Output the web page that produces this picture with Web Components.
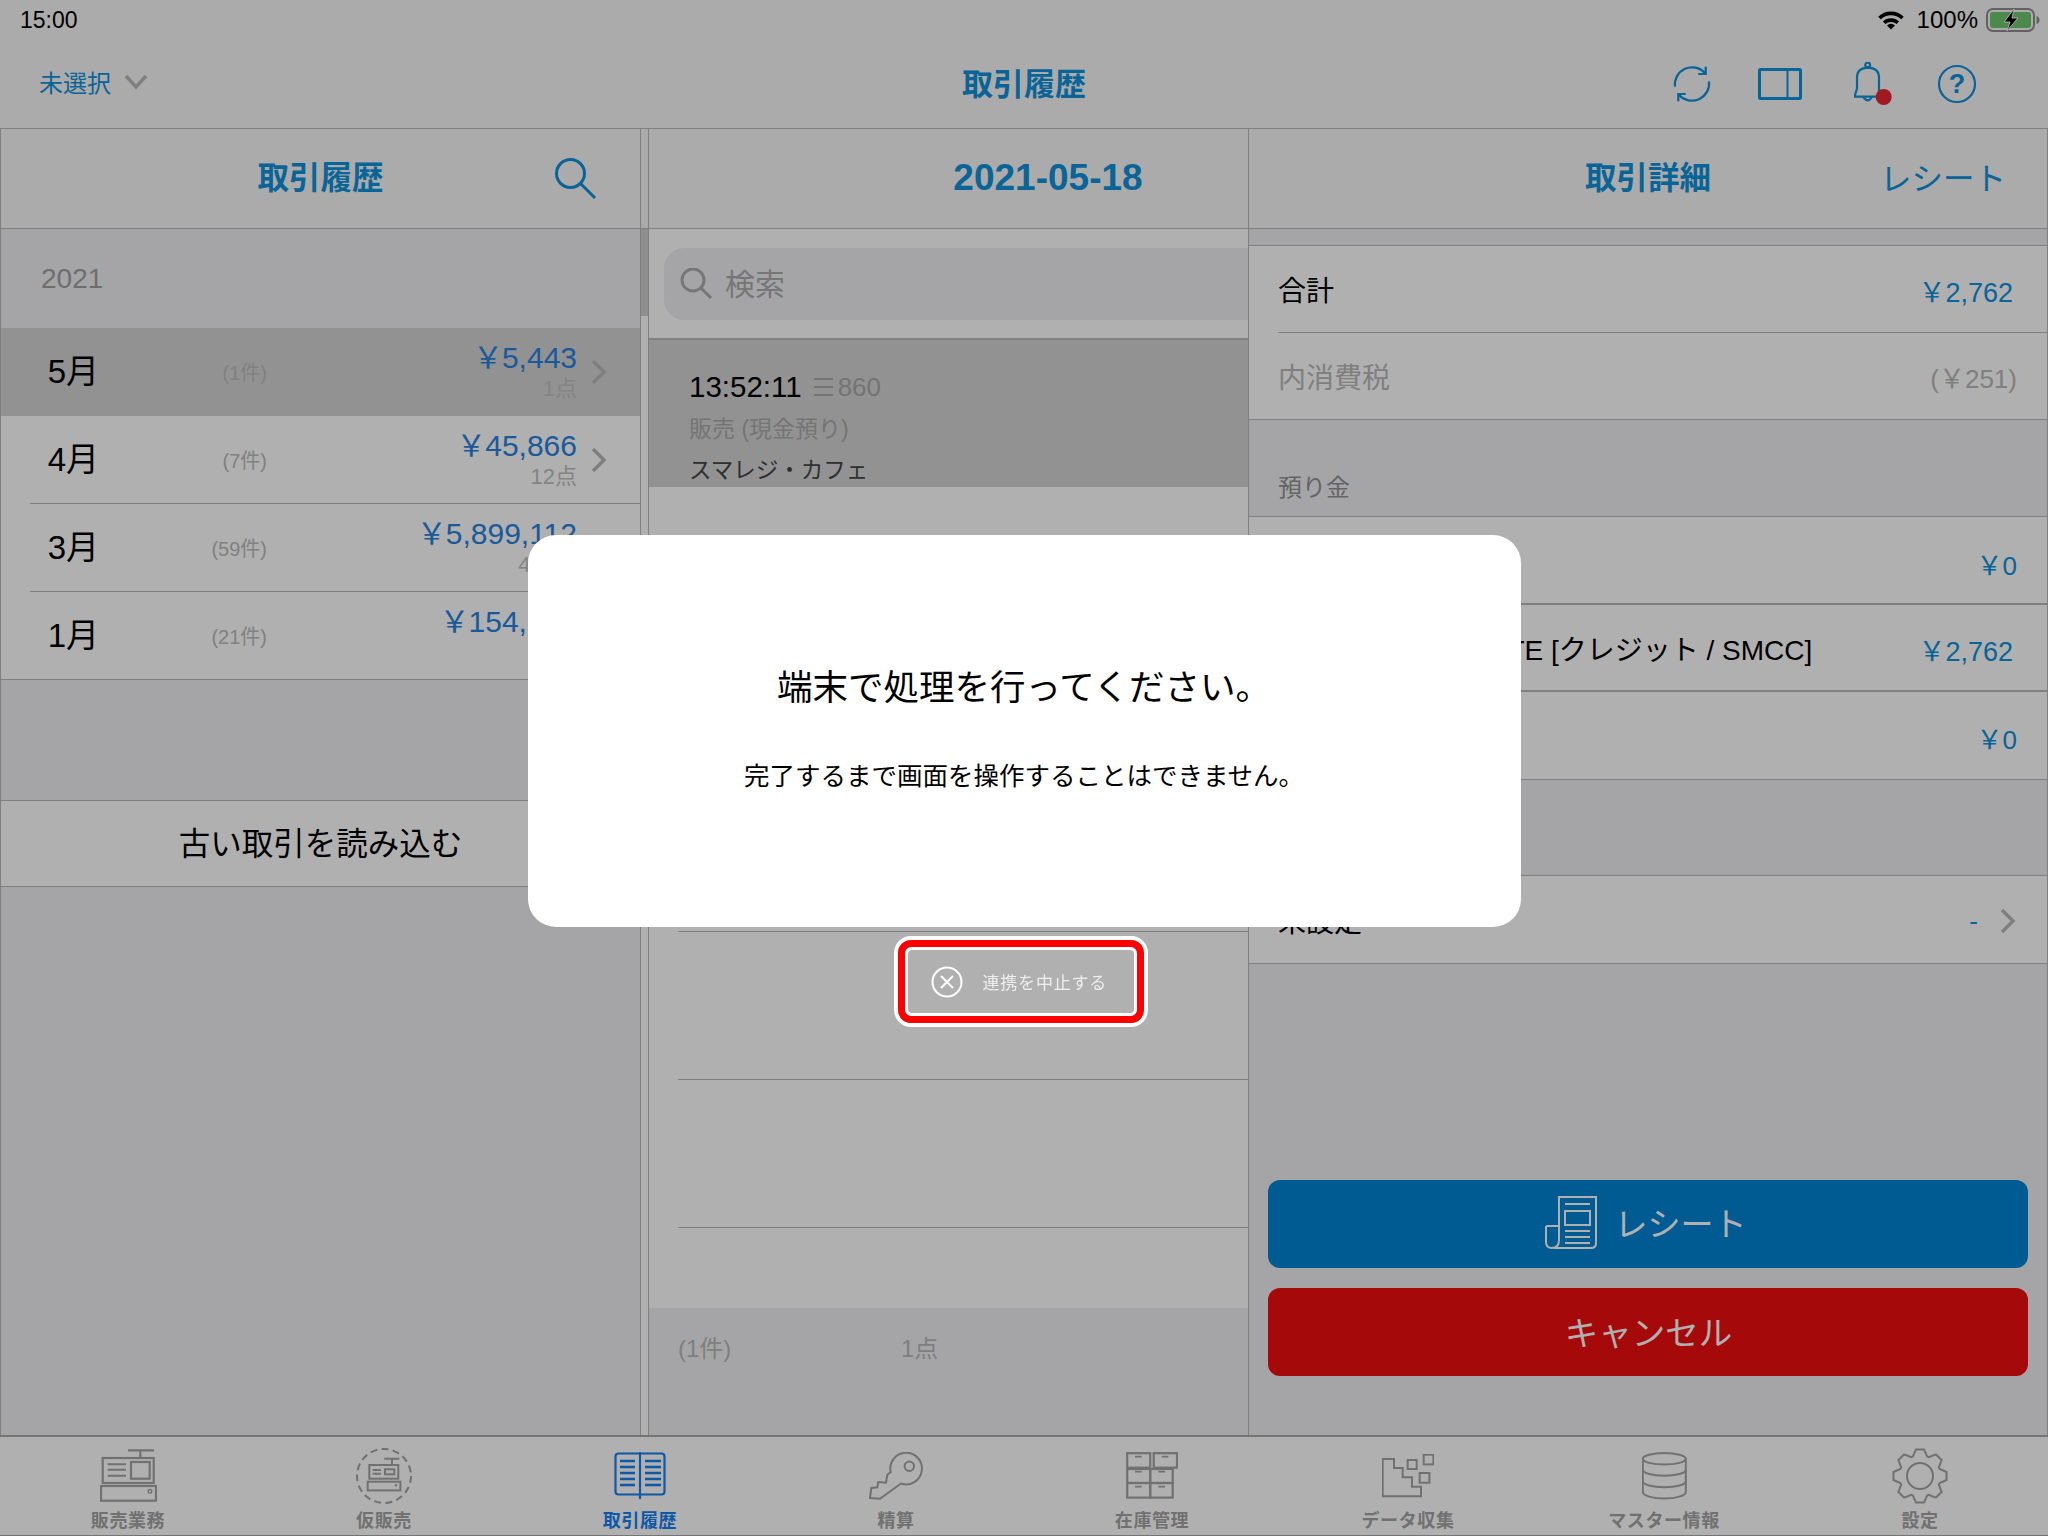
<!DOCTYPE html>
<html lang="ja">
<head>
<meta charset="utf-8">
<title>取引履歴</title>
<style>
  html, body { margin: 0; padding: 0; }
  body {
    width: 2048px;
    height: 1536px;
    overflow: hidden;
    background: #f0f0f3;
    color: #000;
    font-family: "Liberation Sans", "Noto Sans CJK JP", sans-serif;
    --blue: #0e91dc;
    --line: #b9b9b9;
    --section: #f0f0f3;
  }
  pos-shell { display: block; }
  svg { display: block; }
</style>
</head>
<body>

<pos-shell>
  <pos-status-bar time="15:00" level="100%"></pos-status-bar>
  <pos-nav-bar shop="未選択" title="取引履歴"></pos-nav-bar>

  <pos-panes>
    <month-pane title="取引履歴" year="2021">
      <month-row selected label="5月" count="(1件)" amount="5,443" items="1点" chevron></month-row>
      <month-row label="4月" count="(7件)" amount="45,866" items="12点" chevron sep></month-row>
      <month-row label="3月" count="(59件)" amount="5,899,112" items="412点" chevron sep></month-row>
      <month-row label="1月" count="(21件)" amount="154,308" items="38点" chevron full></month-row>
    </month-pane>

    <pane-rail></pane-rail>

    <sale-pane date="2021-05-18" count="(1件)" items="1点">
      <sale-row selected time="13:52:11" no="860" kind="販売 (現金預り)" shop="スマレジ・カフェ"></sale-row>
      <sale-row></sale-row>
      <sale-row sep></sale-row>
      <sale-row sep></sale-row>
      <sale-row sep></sale-row>
      <sale-row sep></sale-row>
      <sale-row sep></sale-row>
    </sale-pane>

    <detail-pane title="取引詳細" action="レシート">
      <detail-row label="合計" value="2,762" yen inset trim></detail-row>
      <detail-row muted label="内消費税" value="251" yen paren></detail-row>
      <detail-section label="預り金"></detail-section>
      <detail-row label="現金" value="0" yen heavy tall low></detail-row>
      <detail-row label="スマレジ・PAYGATE [クレジット / SMCC]" value="2,762" yen heavy trim></detail-row>
      <detail-row label="電子マネー" value="0" yen tall></detail-row>
      <detail-section short label="顧客"></detail-section>
      <detail-row label="未設定" value="-" chevron tall></detail-row>
      <action-button slot="actions" tone="blue">
        <svg width="52" height="53" viewBox="0 0 52 53" fill="none" stroke="currentColor" stroke-width="2">
          <path d="M14 44 V1 H51 V47 Q51 52 46 52 H9"/>
          <path d="M1 30 H14 M1 30 V46 Q1 52 7 52 Q14 52 14 44"/>
          <path d="M20 8 H45 M20 41 H45 M20 47 H45 M20 35 H45"/>
          <rect x="20" y="15" width="25" height="14"/>
        </svg>
        <span>レシート</span>
      </action-button>
      <action-button slot="actions" tone="red"><span style="padding-left: 6px; font-size: 33.5px;">キャンセル</span></action-button>
    </detail-pane>
  </pos-panes>

  <pos-tab-bar>
    <tab-item label="販売業務">
      <svg width="57" height="53" viewBox="0 0 57 53" fill="none" stroke="currentColor" stroke-width="2.2">
        <path d="M28 1.3 H54 M40.3 1.3 V9"/>
        <rect x="2.7" y="9" width="51" height="25"/>
        <path d="M7.7 15.3 H26 M7.7 20.7 H26 M7.7 26.7 H26" stroke-width="2"/>
        <rect x="31" y="13" width="18.7" height="16.7"/>
        <rect x="1" y="37" width="55" height="14.7"/>
        <circle cx="50" cy="42.3" r="1.8" stroke-width="1.4"/>
      </svg>
    </tab-item>
    <tab-item label="仮販売">
      <svg width="58" height="58" viewBox="-29 -29 58 58" fill="none" stroke="currentColor" stroke-width="2">
        <circle r="27" stroke-dasharray="7 4.3"/>
        <path d="M0.3 -17.3 H15.3 M8 -17.3 V-11"/>
        <rect x="-14.7" y="-11" width="29" height="13.7"/>
        <path d="M-11.3 -6 H-3 M-11.3 -2.3 H-3"/>
        <rect x="1" y="-6.7" width="9.3" height="5"/>
        <rect x="-16.3" y="5.7" width="32.7" height="8.7"/>
        <circle cx="12" cy="9.3" r="1.2" fill="currentColor" stroke="none"/>
      </svg>
    </tab-item>
    <tab-item active label="取引履歴">
      <svg width="52" height="47" viewBox="0 0 52 47" fill="none" stroke="currentColor" stroke-width="2.2">
        <rect x="1.5" y="1.5" width="49" height="41" rx="3"/>
        <path d="M26 0 V47"/>
        <path d="M6 9 H21 M6 15 H21 M6 21 H21 M6 27 H21 M6 33 H21" stroke-width="2.6"/>
        <path d="M31 9 H47 M31 15 H47 M31 21 H47 M31 27 H47 M31 33 H47" stroke-width="2.6"/>
      </svg>
    </tab-item>
    <tab-item label="精算">
      <svg width="55" height="48" viewBox="0 0 55 48" fill="none" stroke="currentColor" stroke-width="2">
        <path d="M21.7 20 A15.8 15.8 0 1 1 32 31.5 L11 46.7 L1 46 L2.3 36 L8.3 35.3 L9.3 30 L17 30.7 L18.3 22.7 Z"/>
        <circle cx="40.3" cy="14.3" r="4.7"/>
      </svg>
    </tab-item>
    <tab-item label="在庫管理">
      <svg width="52" height="47" viewBox="0 0 52 47" fill="none" stroke="currentColor" stroke-width="2.2">
        <rect x="1.2" y="1.2" width="23" height="14.5"/>
        <rect x="27.7" y="1.2" width="23.3" height="14.5"/>
        <rect x="1.2" y="17" width="23" height="14"/>
        <rect x="24.2" y="17" width="22.5" height="14"/>
        <rect x="1.2" y="31" width="23" height="14.6"/>
        <rect x="24.2" y="31" width="22.5" height="14.6"/>
        <path d="M9 4.7 H15.7 M35.7 4.7 H42.3 M9 19.7 H15.7 M32.3 19.7 H39 M9 34.7 H15.7 M32.3 34.7 H39" stroke-width="1.8"/>
      </svg>
    </tab-item>
    <tab-item label="データ収集">
      <svg width="52" height="44" viewBox="0 0 52 44" fill="none" stroke="currentColor" stroke-width="2">
        <path d="M0.7 5 H12 V14 H20.7 V23.3 H30 V32.7 H39 V42.3 H0.7 Z"/>
        <rect x="25.7" y="6" width="9" height="9"/>
        <rect x="41.7" y="0.7" width="9.7" height="9.7"/>
        <rect x="37.7" y="19" width="9.7" height="9.7"/>
      </svg>
    </tab-item>
    <tab-item label="マスター情報">
      <svg width="45" height="48" viewBox="0 0 45 48" fill="none" stroke="currentColor" stroke-width="2">
        <ellipse cx="22.3" cy="6.8" rx="21.5" ry="5.8"/>
        <path d="M0.8 6.8 V40 A21.5 6.5 0 0 0 43.8 40 V6.8"/>
        <path d="M0.8 17.7 A21.5 6 0 0 0 43.8 17.7 M0.8 29.3 A21.5 6 0 0 0 43.8 29.3"/>
      </svg>
    </tab-item>
    <tab-item label="設定">
      <svg width="56" height="56" viewBox="-28 -28 56 56" fill="none" stroke="currentColor" stroke-width="2">
        <defs><path id="tooth" d="M-7.6 -18.6 L-4 -26.5 H4 L7.6 -18.6"/></defs>
        <use href="#tooth"/><use href="#tooth" transform="rotate(45)"/>
        <use href="#tooth" transform="rotate(90)"/><use href="#tooth" transform="rotate(135)"/>
        <use href="#tooth" transform="rotate(180)"/><use href="#tooth" transform="rotate(225)"/>
        <use href="#tooth" transform="rotate(270)"/><use href="#tooth" transform="rotate(315)"/>
        <circle r="13"/>
      </svg>
    </tab-item>
  </pos-tab-bar>
</pos-shell>

<modal-layer>
  <processing-dialog>
    <span slot="title">端末で処理を行ってください。</span>
    <span slot="note">完了するまで画面を操作することはできません。</span>
  </processing-dialog>
  <stop-button>連携を中止する</stop-button>
</modal-layer>

<script>
  const YEN = '\uFFE5';
  const CHEVRON = `<svg width="16" height="26" viewBox="0 0 16 26" fill="none" stroke="#b9b9b9" stroke-width="3.4"><path d="M2 2 L13 13 L2 24"/></svg>`;

  class PosElement extends HTMLElement {
    constructor() {
      super();
      this.attachShadow({ mode: 'open' });
    }
    connectedCallback() {
      this.shadowRoot.innerHTML = this.render();
    }
    attr(name, fallback = '') {
      const v = this.getAttribute(name);
      return v === null ? fallback : v;
    }
  }

  class PosStatusBar extends PosElement {
    render() {
      return `
        <style>
          :host { display: flex; align-items: center; height: 40px; padding: 0 8px 0 20px; background: #f8f8f8; box-sizing: border-box; }
          .time { font-size: 23px; flex: 1; }
          .level { font-size: 24px; margin: 0 8px 0 13px; }
          svg { display: block; }
        </style>
        <span class="time">${this.attr('time')}</span>
        <svg width="26" height="20" viewBox="0 0 26 20">
          <g fill="none" stroke="#000" stroke-width="3.6">
            <path d="M1.5 8 A16.5 16.5 0 0 1 24.5 8"/>
            <path d="M6.2 12.8 A10 10 0 0 1 19.8 12.8"/>
          </g>
          <path d="M13 19.5 L9 15.4 A5.6 5.6 0 0 1 17 15.4 Z"/>
        </svg>
        <span class="level">${this.attr('level')}</span>
        <svg width="54" height="24" viewBox="0 0 54 24">
          <rect x="1" y="1" width="47" height="22" rx="6" fill="none" stroke="#8f8f8f" stroke-width="2"/>
          <rect x="4" y="4" width="41" height="16" rx="3" fill="#6fc96f"/>
          <path d="M50.5 8 Q53.5 9 53.5 12 Q53.5 15 50.5 16 Z" fill="#8f8f8f"/>
          <path d="M28 1 L18 14 H24 L21 23 L32 10 H26 Z" stroke="#f8f8f8" stroke-width="1"/>
        </svg>`;
    }
  }

  class PosNavBar extends PosElement {
    render() {
      return `
        <style>
          :host { display: grid; grid-template-columns: 1fr auto 1fr; align-items: center; height: 89px; box-sizing: border-box; padding-bottom: 5px; background: #f8f8f8; border-bottom: 1px solid var(--line); color: var(--blue); }
          .shop { display: flex; align-items: center; gap: 13px; padding-left: 39px; font-size: 24px; }
          .title { font-size: 31px; font-weight: 700; }
          .tools { display: flex; align-items: center; justify-content: flex-end; padding-right: 71px; padding-top: 4px; }
          svg { display: block; }
          .dot { fill: #e82630; stroke: none; }
        </style>
        <div class="shop">${this.attr('shop')}
          <svg width="24" height="16" viewBox="0 0 24 16" fill="none" stroke="#b9b9b9" stroke-width="3.4"><path d="M2 2 L12 13 L22 2"/></svg>
        </div>
        <div class="title">${this.attr('title')}</div>
        <div class="tools">
          <svg width="38" height="40" viewBox="0 0 38 40" fill="none" stroke="currentColor" stroke-width="2.2">
            <path d="M2 22.7 A17.3 17.3 0 0 1 32 9"/><path d="M36 17.3 A17.3 17.3 0 0 1 6 31"/>
            <path d="M32.7 2.7 V10 H25.3"/><path d="M5.3 37.3 V30 H12.7"/>
          </svg>
          <svg style="margin-left: 47px" width="44" height="32" viewBox="0 0 44 32" fill="none" stroke="currentColor" stroke-width="3">
            <rect x="1.5" y="1.5" width="41" height="29" rx="1"/><path d="M29.5 1 V31" stroke-width="2"/>
          </svg>
          <svg style="margin-left: 52px" width="40" height="44" viewBox="0 0 40 44" fill="none" stroke="currentColor" stroke-width="2.2">
            <path d="M22 34.7 H0.5 L3 26.7 V15.7 Q3 6 14 5.7 Q25 6 25 15.7 V29"/>
            <circle cx="13.7" cy="3" r="2.4"/>
            <path d="M9 34.7 Q13.7 42 18 34.7"/>
            <circle class="dot" cx="29.7" cy="35" r="8"/>
          </svg>
          <svg style="margin-left: 43px" width="40" height="40" viewBox="0 0 40 40" fill="none" stroke="currentColor" stroke-width="2.2">
            <circle cx="20" cy="20" r="18"/>
            <text x="20" y="29" text-anchor="middle" font-size="27" font-weight="700" fill="currentColor" stroke="none">?</text>
          </svg>
        </div>`;
    }
  }

  class PosPanes extends PosElement {
    render() {
      return `
        <style>
          :host { display: grid; grid-template-columns: 641px 7px 600px 800px; height: 1306px; }
        </style>
        <slot></slot>`;
    }
  }

  class PaneRail extends PosElement {
    render() {
      return `
        <style>
          :host { display: block; background: #fff; }
          .head { height: 100px; box-sizing: border-box; background: #f8f8f8; border-bottom: 1px solid var(--line); }
          .thumb { height: 87px; background: #cfcfcf; }
        </style>
        <div class="head"></div>
        <div class="thumb"></div>`;
    }
  }

  class PaneHeader extends PosElement {
    render() {
      return `
        <style>
          :host { display: flex; align-items: center; justify-content: center; position: relative; height: 100px; box-sizing: border-box; flex: none; padding-bottom: 7px; background: #f8f8f8; border-bottom: 1px solid var(--line); color: var(--blue); font-size: 31.5px; font-weight: 700; }
          .end { position: absolute; top: 0; bottom: 0; display: flex; align-items: center; font-weight: 400; }
        </style>
        <slot></slot>
        <div class="end" style="${this.attr('end-style')}"><slot name="end"></slot></div>`;
    }
  }

  class MonthPane extends PosElement {
    render() {
      return `
        <style>
          :host { display: flex; flex-direction: column; background: var(--section); border-left: 1px solid var(--line); border-right: 1px solid var(--line); box-sizing: border-box; }
          .year { height: 99px; display: flex; align-items: center; padding-left: 40px; font-size: 28px; color: #a0a0a0; box-sizing: border-box; }
          .more { margin-top: 120px; height: 87px; display: flex; align-items: center; justify-content: center; padding-bottom: 5px; box-sizing: border-box; background: #fff; border-top: 1px solid var(--line); border-bottom: 1px solid var(--line); font-size: 31.5px; }
        </style>
        <pane-header end-style="right: 43px;">${this.attr('title')}
          <svg slot="end" width="42" height="42" viewBox="0 0 42 42" fill="none" stroke="currentColor" stroke-width="3"><circle cx="15.5" cy="15.5" r="14"/><path d="M26 26 L40 40"/></svg>
        </pane-header>
        <div class="year">${this.attr('year')}</div>
        <slot></slot>
        <div class="more">古い取引を読み込む</div>`;
    }
  }

  class MonthRow extends PosElement {
    render() {
      const bg = this.hasAttribute('selected') ? '#d4d4d5' : '#fff';
      const line = this.hasAttribute('sep') || this.hasAttribute('full') ? 'var(--line)' : 'transparent';
      return `
        <style>
          :host { display: block; height: 88px; box-sizing: border-box; background: ${bg}; }
          .row { display: grid; grid-template-columns: 98px 168px 310px 30px; align-items: center; height: 88px; box-sizing: border-box; border-bottom: 1px solid ${line}; position: relative; }
          :host([sep]) .row::before { content: ""; position: absolute; left: 0; width: 29px; bottom: -1px; height: 1px; background: ${bg}; }
          .label { font-size: 33px; line-height: 40px; text-align: right; }
          .count { font-size: 20px; color: #bbb; text-align: right; }
          .sum { text-align: right; white-space: nowrap; }
          .amount { font-size: 30px; line-height: 32px; color: #2683df; }
          .yen { margin-right: -1px; }
          .items { font-size: 22px; line-height: 26px; color: #c0c0c0; margin-top: 2px; }
          .chev { padding-left: 14px; }
          svg { display: block; }
        </style>
        <div class="row">
          <div class="label">${this.attr('label')}</div>
          <div class="count">${this.attr('count')}</div>
          <div class="sum">
            <div class="amount"><span class="yen">${YEN}</span>${this.attr('amount')}</div>
            <div class="items">${this.attr('items')}</div>
          </div>
          <div class="chev">${CHEVRON}</div>
        </div>`;
    }
  }

  class SalePane extends PosElement {
    render() {
      return `
        <style>
          :host { display: flex; flex-direction: column; box-sizing: border-box; height: 1306px; background: #fff; border-left: 1px solid var(--line); }
          .search-band { flex: none; height: 111px; padding: 19px 0 18px 15px; box-sizing: border-box; border-bottom: 2px solid var(--line); }
          .search { height: 72px; display: flex; align-items: center; gap: 11px; padding-left: 16px; background: var(--section); border-radius: 20px 0 0 20px; color: #acacac; font-size: 30px; }
          .search span { padding-bottom: 5px; }
          .rows { height: 968px; flex: none; overflow: hidden; }
          .foot { flex: 1; background: var(--section); display: flex; align-items: center; padding: 0 0 50px 29px; font-size: 24px; color: #b8b8b8; }
          .foot span:first-child { width: 223px; }
        </style>
        <pane-header><span style="font-size: 37px; padding: 5px 0 0 199px;">${this.attr('date')}</span></pane-header>
        <div class="search-band">
          <div class="search">
            <svg width="34" height="32" viewBox="0 0 34 32" fill="none" stroke="currentColor" stroke-width="3"><circle cx="13" cy="12" r="11"/><path d="M21 20 L31 30"/></svg>
            <span>検索</span>
          </div>
        </div>
        <div class="rows"><slot></slot></div>
        <div class="foot"><span>${this.attr('count')}</span><span>${this.attr('items')}</span></div>`;
    }
  }

  class SaleRow extends PosElement {
    render() {
      const body = this.hasAttribute('time') ? `
        <div class="top"><span class="time">${this.attr('time')}</span><span class="no"><i></i>${this.attr('no')}</span></div>
        <div class="kind">${this.attr('kind')}</div>
        <div class="shop">${this.attr('shop')}</div>` : '';
      return `
        <style>
          :host { display: block; height: 148px; box-sizing: border-box; overflow: hidden; padding-left: 40px; position: relative; line-height: 40px; }
          :host([selected]) { height: 147px; background: #d4d4d5; padding-top: 27px; }
          :host([sep])::before { content: ""; position: absolute; left: 29px; right: 0; top: 0; height: 1px; background: var(--line); }
          .top { display: flex; align-items: center; height: 40px; }
          .time { font-size: 29.5px; }
          .no { font-size: 26px; color: #a8a8a8; margin-left: 12px; display: flex; align-items: center; gap: 5px; }
          i { display: block; width: 19px; height: 14px; border-top: 2px solid #a8a8a8; border-bottom: 2px solid #a8a8a8; position: relative; }
          i::after { content: ""; position: absolute; left: 0; right: 0; top: 6px; height: 2px; background: #a8a8a8; }
          .kind { font-size: 23px; color: #aaa; margin-top: 2px; }
          .shop { font-size: 22.5px; color: #444; margin-top: 2px; }
        </style>
        ${body}`;
    }
  }

  class DetailPane extends PosElement {
    render() {
      return `
        <style>
          :host { display: flex; flex-direction: column; background: var(--section); border-left: 1px solid var(--line); border-right: 1px solid var(--line); box-sizing: border-box; }
          .band { height: 16px; flex: none; border-bottom: 1px solid var(--line); box-sizing: content-box; }
          .actions { display: flex; flex-direction: column; gap: 20px; padding: 216px 19px 0 19px; }
        </style>
        <pane-header end-style="right: 41px; font-size: 31.5px; padding-bottom: 5px;">${this.attr('title')}
          <span slot="end">${this.attr('action')}</span>
        </pane-header>
        <div class="band"></div>
        <slot></slot>
        <div class="actions"><slot name="actions"></slot></div>`;
    }
  }

  class DetailRow extends PosElement {
    render() {
      const v = this.attr('value');
      const yen = this.hasAttribute('yen') ? `<span class="yen">${YEN}</span>` : '';
      const val = this.hasAttribute('paren') ? `(${yen}${v})` : `${yen}${v}`;
      return `
        <style>
          :host { display: flex; align-items: center; height: 87px; flex: none; box-sizing: border-box; padding: 0 30px 0 29px; background: #fff; position: relative; font-size: 28px; border-bottom: 1px solid var(--line); }
          :host([tall]) { height: 88px; }
          :host([heavy]) { border-bottom-width: 2px; }
          :host([trim]) { padding-right: 34px; }
          :host([inset]) { border-bottom-color: #fff; }
          :host([inset])::after { content: ""; position: absolute; left: 29px; right: 0; bottom: -1px; height: 1px; background: var(--line); }
          :host([muted]) .label, :host([muted]) .value { color: #b9b9b9; }
          :host([muted]) .value { padding-top: 0; }
          :host([low]) .value { padding-top: 7px; }
          .label { flex: 1; }
          .value { font-size: 26px; color: var(--blue); padding-top: 3px; display: flex; align-items: center; gap: 22px; }
          :host([trim]) .value { font-size: 27px; }
          svg { display: block; margin-right: 1px; }
        </style>
        <div class="label">${this.attr('label')}</div>
        <div class="value"><span>${val}</span>${this.hasAttribute('chevron') ? CHEVRON : ''}</div>`;
    }
  }

  class DetailSection extends PosElement {
    render() {
      return `
        <style>
          :host { display: flex; align-items: flex-end; height: 97px; flex: none; box-sizing: border-box; padding: 0 0 13px 29px; font-size: 24px; color: #919191; border-bottom: 1px solid var(--line); }
          :host([short]) { height: 96px; }
        </style>
        ${this.attr('label')}`;
    }
  }

  class ActionButton extends PosElement {
    render() {
      const bg = this.attr('tone') === 'red' ? '#ef0e0e' : '#0085d4';
      return `
        <style>
          :host { display: flex; align-items: center; justify-content: center; gap: 18px; height: 88px; box-sizing: border-box; padding: 0 5px 4px 0; border-radius: 12px; background: ${bg}; color: #fff; font-size: 33px; }
        </style>
        <slot></slot>`;
    }
  }

  class PosTabBar extends PosElement {
    render() {
      return `
        <style>
          :host { display: grid; grid-template-columns: repeat(8, 256px); height: 101px; box-sizing: border-box; background: #fff; border-top: 2px solid #a8a8a8; border-bottom: 1px solid #a8a8a8; }
        </style>
        <slot></slot>`;
    }
  }

  class TabItem extends PosElement {
    render() {
      return `
        <style>
          :host { display: flex; flex-direction: column; align-items: center; color: #a4a4a4; overflow: hidden; }
          :host([active]) { color: #1381f4; }
          .icon { display: flex; align-items: center; justify-content: center; padding-top: 9px; box-sizing: border-box; height: 68px; }
          .label { font-size: 18px; line-height: 26px; letter-spacing: 0.6px; font-weight: 700; margin-top: 3px; }
        </style>
        <div class="icon"><slot></slot></div>
        <div class="label">${this.attr('label')}</div>`;
    }
  }

  class ModalLayer extends PosElement {
    render() {
      return `
        <style>
          :host { position: fixed; inset: 0; display: flex; flex-direction: column; align-items: center; padding-top: 535px; box-sizing: border-box; background: rgba(0, 0, 0, 0.31); }
        </style>
        <slot></slot>`;
    }
  }

  class ProcessingDialog extends PosElement {
    render() {
      return `
        <style>
          :host { display: block; width: 993px; height: 392px; box-sizing: border-box; padding-top: 128px; background: #fff; border-radius: 28px; text-align: center; color: #000; }
          .title { font-size: 35.5px; line-height: 50px; }
          .note { font-size: 25.5px; line-height: 40px; margin-top: 43px; }
        </style>
        <div class="title"><slot name="title"></slot></div>
        <div class="note"><slot name="note"></slot></div>`;
    }
  }

  class StopButton extends PosElement {
    render() {
      return `
        <style>
          :host { display: block; margin: 9px 7px 0 0; border: 4px solid #fff; border-radius: 17px; }
          .ring { border: 7px solid #f00; border-radius: 13px; }
          .inner { display: flex; align-items: center; gap: 20px; width: 232px; height: 69px; padding-left: 23px; box-sizing: border-box; border: 3px solid #fff; border-radius: 7px; color: #eee; font-size: 17px; letter-spacing: 0.8px; }
          svg { display: block; flex: none; }
        </style>
        <div class="ring">
          <div class="inner">
            <svg width="32" height="32" viewBox="0 0 32 32" fill="none" stroke="#fff" stroke-width="2"><circle cx="16" cy="16" r="14.5"/><path d="M10 10 L22 22 M22 10 L10 22"/></svg>
            <span><slot></slot></span>
          </div>
        </div>`;
    }
  }

  customElements.define('pos-status-bar', PosStatusBar);
  customElements.define('pos-nav-bar', PosNavBar);
  customElements.define('pos-panes', PosPanes);
  customElements.define('pane-rail', PaneRail);
  customElements.define('pane-header', PaneHeader);
  customElements.define('month-pane', MonthPane);
  customElements.define('month-row', MonthRow);
  customElements.define('sale-pane', SalePane);
  customElements.define('sale-row', SaleRow);
  customElements.define('detail-pane', DetailPane);
  customElements.define('detail-row', DetailRow);
  customElements.define('detail-section', DetailSection);
  customElements.define('action-button', ActionButton);
  customElements.define('pos-tab-bar', PosTabBar);
  customElements.define('tab-item', TabItem);
  customElements.define('modal-layer', ModalLayer);
  customElements.define('processing-dialog', ProcessingDialog);
  customElements.define('stop-button', StopButton);
</script>
</body>
</html>
